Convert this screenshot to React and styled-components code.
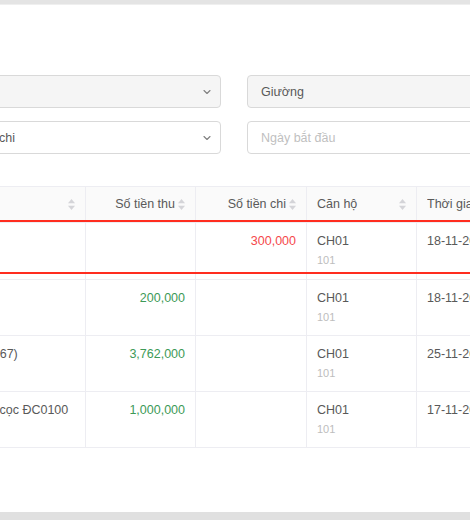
import styled, { createGlobalStyle } from "styled-components";
import { ChevronDown } from "lucide-react";

const Global = createGlobalStyle`
  html, body { margin: 0; padding: 0; background: #fff; }
  body { font-family: "Liberation Sans", Arial, Helvetica, sans-serif; }
  * { box-sizing: border-box; }
`;

const Page = styled.div`
  width: 470px;
  height: 520px;
  overflow: hidden;
  display: flex;
  flex-direction: column;
  background: #fff;
`;

const TopBar = styled.div`
  height: 5px;
  flex: none;
  background: #e4e4e4;
  border-bottom: 1px solid #efefef;
`;

const BottomBar = styled.div`
  height: 8px;
  flex: none;
  background: #e0e0e0;
`;

const Main = styled.main`
  flex: 1;
  padding-top: 70px;
  overflow: hidden;
`;

const Filters = styled.div`
  margin-left: -63px;
  display: grid;
  grid-template-columns: 284px 320px;
  column-gap: 26px;
  row-gap: 13px;
`;

const Field = styled.div`
  height: 33px;
  border: 1px solid #d9d9d9;
  border-radius: 4px;
  background: ${(p) => (p.$disabled ? "#f5f5f5" : "#fff")};
  display: flex;
  align-items: center;
  padding: 0 7px 0 13px;
  font-size: 12.5px;
  color: ${(p) => (p.$placeholder ? "#bfbfbf" : "#595959")};
  white-space: nowrap;
`;

const FieldText = styled.span`
  flex: 1;
`;

const Arrow = styled(ChevronDown)`
  color: #7f7f7f;
  flex: none;
`;

const Table = styled.table`
  margin-top: 32px;
  margin-left: -80px;
  border-collapse: separate;
  border-spacing: 0;
  table-layout: fixed;
  width: 697px;
  font-size: 12.5px;
  color: #595959;
`;

const Th = styled.th`
  background: #fafafa;
  font-weight: 400;
  padding: 8px 10px;
  line-height: 19px;
  border-top: 1px solid #ededf2;
  border-bottom: 1px solid #ededf2;
  border-right: 1px solid #ededf2;
  white-space: nowrap;
`;

const HeadInner = styled.div`
  display: flex;
  align-items: center;
  gap: 3px;
`;

const HeadTitle = styled.span`
  flex: 1;
  text-align: ${(p) => p.$align || "left"};
  overflow: hidden;
`;

const Td = styled.td`
  position: relative;
  vertical-align: top;
  padding: 9px 10px 10px;
  line-height: 18px;
  text-align: ${(p) => p.$align || "left"};
  border-bottom: 1px solid #ededf2;
  border-right: 1px solid #ededf2;
  white-space: nowrap;
  overflow: hidden;

  ${(p) =>
    p.$marked &&
    `
    padding-bottom: 11px;
    overflow: visible;
    &::after {
      content: "";
      position: absolute;
      left: -1px;
      right: -1px;
      top: -3px;
      bottom: 5px;
      border-top: 2px solid #ff2d1f;
      border-bottom: 2px solid #ff2d1f;
      pointer-events: none;
    }
  `}
`;

const Amount = styled.span`
  color: ${(p) => (p.$kind === "out" ? "#f5484b" : "#3d9a57")};
`;

const Sub = styled.div`
  margin-top: 2px;
  font-size: 11px;
  line-height: 16px;
  color: #bdbdbd;
`;

function SortIcon() {
  return (
    <svg width="7" height="11" viewBox="0 0 7 11" style={{ flex: "none" }}>
      <path d="M3.5 0 L7 4.2 L0 4.2 Z" fill="#d4d4d8" />
      <path d="M0 6.8 L7 6.8 L3.5 11 Z" fill="#d4d4d8" />
    </svg>
  );
}

const columns = [
  { title: "Nội dung", width: 166, align: "left" },
  { title: "Số tiền thu", width: 110, align: "right" },
  { title: "Số tiền chi", width: 111, align: "right" },
  { title: "Căn hộ", width: 110, align: "left" },
  { title: "Thời gian", width: 200, align: "left" },
];

const rows = [
  { desc: "Chi tiền", income: "", expense: "300,000", apt: "CH01", room: "101", time: "18-11-2023 09:12", marked: true },
  { desc: "Thu khác", income: "200,000", expense: "", apt: "CH01", room: "101", time: "18-11-2023 08:40" },
  { desc: "Tiền nhà (0367)", income: "3,762,000", expense: "", apt: "CH01", room: "101", time: "25-11-2023 10:05" },
  { desc: "Thu tiền đặt cọc ĐC0100", income: "1,000,000", expense: "", apt: "CH01", room: "101", time: "17-11-2023 14:30" },
];

export default function App() {
  return (
    <Page>
      <Global />
      <TopBar />
      <Main>
        <Filters>
          <Field $disabled>
            <FieldText>Phòng</FieldText>
            <Arrow size={12} strokeWidth={2.2} />
          </Field>
          <Field $disabled>
            <FieldText>Giường</FieldText>
          </Field>
          <Field>
            <FieldText>Loại thu chi</FieldText>
            <Arrow size={12} strokeWidth={2.2} />
          </Field>
          <Field $placeholder>
            <FieldText>Ngày bắt đầu</FieldText>
          </Field>
        </Filters>

        <Table>
          <colgroup>
            {columns.map((c) => (
              <col key={c.title} style={{ width: c.width }} />
            ))}
          </colgroup>
          <thead>
            <tr>
              {columns.map((c) => (
                <Th key={c.title}>
                  <HeadInner>
                    <HeadTitle $align={c.align}>{c.title}</HeadTitle>
                    <SortIcon />
                  </HeadInner>
                </Th>
              ))}
            </tr>
          </thead>
          <tbody>
            {rows.map((r, i) => (
              <tr key={i}>
                <Td $marked={r.marked}>{r.desc}</Td>
                <Td $marked={r.marked} $align="right">
                  <Amount $kind="in">{r.income}</Amount>
                </Td>
                <Td $marked={r.marked} $align="right">
                  <Amount $kind="out">{r.expense}</Amount>
                </Td>
                <Td $marked={r.marked}>
                  {r.apt}
                  <Sub>{r.room}</Sub>
                </Td>
                <Td $marked={r.marked}>{r.time}</Td>
              </tr>
            ))}
          </tbody>
        </Table>
      </Main>
      <BottomBar />
    </Page>
  );
}
